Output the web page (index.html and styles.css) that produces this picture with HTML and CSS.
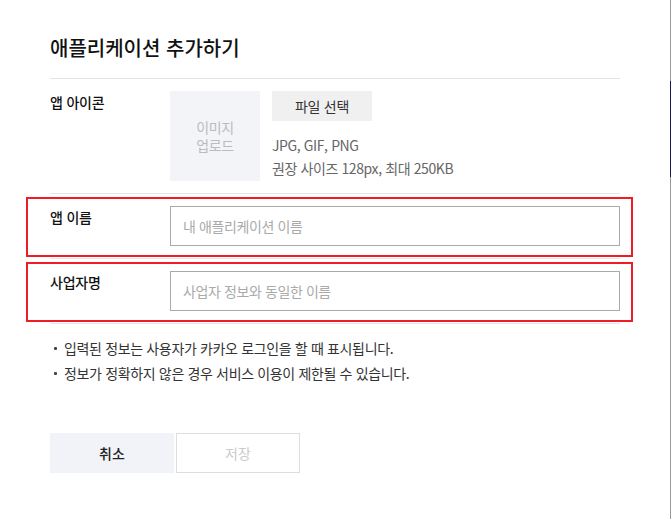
FILE: index.html
```html
<!DOCTYPE html>
<html lang="ko">
<head>
  <meta charset="UTF-8" />
  <meta name="viewport" content="width=device-width, initial-scale=1.0"/>
  <title>애플리케이션 추가하기</title>
  <link rel="stylesheet" href="styles.css">
</head>
<body>
  <div class="page">
    <div class="dialog">
      <header class="dialog-head">
        <h1>애플리케이션 추가하기</h1>
      </header>

      <form class="app-form">
        <div class="row">
          <div class="label">앱 아이콘</div>
          <div class="upload">
            <div class="thumb">이미지<br>업로드</div>
            <div class="upload-info">
              <button type="button" class="file-btn">파일 선택</button>
              <p class="hint">JPG, GIF, PNG<br>권장 사이즈 128px, 최대 250KB</p>
            </div>
          </div>
        </div>

        <div class="row marked">
          <label class="label" for="app-name">앱 이름</label>
          <input type="text" id="app-name" placeholder="내 애플리케이션 이름" />
        </div>

        <div class="row marked">
          <label class="label" for="biz-name">사업자명</label>
          <input type="text" id="biz-name" placeholder="사업자 정보와 동일한 이름" />
        </div>

        <ul class="notes">
          <li>입력된 정보는 사용자가 카카오 로그인을 할 때 표시됩니다.</li>
          <li>정보가 정확하지 않은 경우 서비스 이용이 제한될 수 있습니다.</li>
        </ul>

        <div class="actions">
          <button type="button" class="btn cancel">취소</button>
          <button type="submit" class="btn save" disabled>저장</button>
        </div>
      </form>
    </div>
    <div class="scrollbar"><div class="scroll-thumb"></div></div>
  </div>
</body>
</html>
```

FILE: styles.css
```css
* {
  box-sizing: border-box;
  font-family: "Noto Sans CJK KR", "Noto Sans", sans-serif;
}

body {
  margin: 0;
  background: #fff;
  color: #222;
}

.page {
  display: flex;
  min-height: 100vh;
}

.dialog {
  flex: 1;
  padding: 0 50px;
}

.dialog-head {
  padding: 34px 0 16px;
  border-bottom: 1px solid #e5e5e5;
}

h1 {
  margin: 0;
  font-size: 20px;
  line-height: 28px;
  font-weight: 500;
  color: #111;
}

.row {
  position: relative;
  display: grid;
  grid-template-columns: 120px 1fr;
  align-items: start;
  padding: 12px 0;
  border-bottom: 1px solid #e5e5e5;
}

/* 빨간 강조 박스 */
.row.marked::after {
  content: "";
  position: absolute;
  top: 3px;
  bottom: 1px;
  left: -24px;
  right: -13px;
  border: 2px solid #ee1c25;
  pointer-events: none;
}

.label {
  font-size: 14px;
  line-height: 22px;
  font-weight: 500;
  color: #111;
  letter-spacing: -0.2px;
}

.upload {
  display: flex;
  gap: 12px;
}

.thumb {
  width: 90px;
  height: 90px;
  background: #f3f4f8;
  color: #bbb;
  font-size: 14px;
  line-height: 18px;
  letter-spacing: -0.3px;
  display: flex;
  align-items: center;
  justify-content: center;
  text-align: center;
}

.file-btn {
  width: 100px;
  height: 30px;
  border: none;
  background: #f0f0f0;
  color: #333;
  font-size: 14px;
  letter-spacing: -0.3px;
  cursor: pointer;
}

.hint {
  margin: 13px 0 0;
  font-size: 14px;
  line-height: 23px;
  letter-spacing: -0.4px;
  color: #666;
}

input {
  height: 40px;
  padding: 0 12px;
  border: 1px solid #aaa;
  border-radius: 0;
  font-size: 14px;
  letter-spacing: -0.4px;
  color: #333;
  outline: none;
}

input::placeholder {
  color: #aaa;
}

.notes {
  list-style: none;
  margin: 12px 0 0;
  padding: 0 0 0 4px;
}

.notes li {
  display: flex;
  align-items: center;
  gap: 7px;
  font-size: 14px;
  line-height: 25px;
  letter-spacing: -0.35px;
  color: #333;
}

.notes li::before {
  content: "";
  width: 3px;
  height: 3px;
  border-radius: 1px;
  background: #444;
}

.actions {
  display: flex;
  gap: 2px;
  margin-top: 47px;
}

.btn {
  width: 124px;
  height: 40px;
  font-size: 14px;
  cursor: pointer;
}

.cancel {
  border: none;
  background: #f1f3f8;
  color: #222;
  font-weight: 500;
}

.save {
  border: 1px solid #ddd;
  background: #fff;
  color: #ccc;
  cursor: default;
}

.scrollbar {
  width: 1px;
  background: #9a9a9a;
}

.scroll-thumb {
  margin-top: 81px;
  height: 96px;
  background: #141a4a;
}
```
